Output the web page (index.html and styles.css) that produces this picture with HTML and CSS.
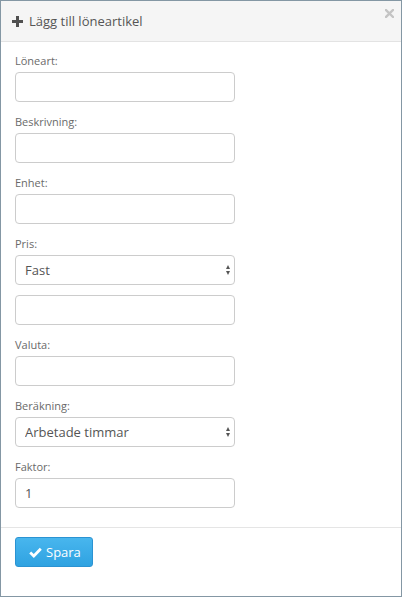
FILE: index.html
```html
<!DOCTYPE html>
<html lang="sv">
<head>
<meta charset="utf-8">
<title>Lägg till löneartikel</title>
<link rel="stylesheet" href="styles.css">
</head>
<body>
<div class="modal">
  <div class="modal-header">
    <svg class="plus" width="11" height="11" viewBox="0 0 11 11"><rect x="4" y="0" width="3" height="11" fill="#505050"/><rect x="0" y="4" width="11" height="3" fill="#505050"/></svg>
    <span class="title">Lägg till löneartikel</span>
    <svg class="close" width="9" height="9" viewBox="0 0 9 9"><path d="M1 1 L8 8 M8 1 L1 8" stroke="#c4c4c4" stroke-width="2.4" stroke-linecap="square"/></svg>
  </div>
  <div class="modal-body">
    <div class="group">
      <label class="label">Löneart:</label>
      <input class="field" type="text">
    </div>
    <div class="group">
      <label class="label">Beskrivning:</label>
      <input class="field" type="text">
    </div>
    <div class="group">
      <label class="label">Enhet:</label>
      <input class="field" type="text">
    </div>
    <div class="group">
      <label class="label">Pris:</label>
      <div class="select-wrap"><select class="field select"><option>Fast</option></select></div>
      <input class="field second" type="text">
    </div>
    <div class="group">
      <label class="label">Valuta:</label>
      <input class="field" type="text">
    </div>
    <div class="group">
      <label class="label">Beräkning:</label>
      <div class="select-wrap"><select class="field select"><option>Arbetade timmar</option></select></div>
    </div>
    <div class="group last">
      <label class="label">Faktor:</label>
      <input class="field" type="text" value="1">
    </div>
  </div>
  <div class="modal-footer">
    <button class="btn" type="button">
      <svg class="check" width="13" height="11" viewBox="0 0 13 11"><path d="M1.2 5.6 L4.8 9 L11.8 1.8" fill="none" stroke="#ffffff" stroke-width="2.8" stroke-linejoin="miter"/></svg>
      <span>Spara</span>
    </button>
  </div>
</div>
</body>
</html>
```

FILE: styles.css
```css
* { box-sizing: border-box; }
html, body { margin: 0; padding: 0; background: #ffffff; }
body { font-family: "Open Sans", "DejaVu Sans", sans-serif; color: #555; }

.modal {
  position: relative;
  width: 402px;
  height: 597px;
  border: 1px solid #8497a4;
  background: #ffffff;
}

.modal-header {
  height: 41px;
  background: #f5f5f5;
  border-bottom: 1px solid #e3e3e3;
  display: flex;
  align-items: center;
  padding-left: 11px;
}
.plus { margin-top: 1px; margin-right: 6px; flex: none; }
.title { font-size: 13px; color: #555; }
.close { position: absolute; top: 8px; right: 7px; }

.modal-body { padding: 11px 14px 7px; }
.group { margin-bottom: 12px; }
.label {
  display: block;
  font-size: 11px;
  line-height: 16px;
  color: #6a6a6a;
  margin-bottom: 3px;
}
.field {
  display: block;
  width: 220px;
  height: 30px;
  margin: 0;
  border: 1px solid #cccccc;
  border-radius: 4px;
  background: #ffffff;
  padding: 0 9px;
  font-family: "Open Sans", "DejaVu Sans", sans-serif;
  font-size: 13px;
  color: #555;
  outline: none;
}
.field.second { margin-top: 10px; }
.select-wrap { position: relative; width: 220px; }
.select { appearance: none; -webkit-appearance: none; padding-left: 9px; }
.select-wrap::before,
.select-wrap::after {
  content: "";
  position: absolute;
  left: 211px;
  width: 0;
  height: 0;
  border-left: 2.5px solid transparent;
  border-right: 2.5px solid transparent;
  pointer-events: none;
}
.select-wrap::before { top: 10px; border-bottom: 4px solid #555; }
.select-wrap::after { top: 16px; border-top: 4px solid #555; }

.modal-footer {
  border-top: 1px solid #e5e5e5;
  padding: 9px 14px;
}
.btn {
  display: flex;
  align-items: center;
  height: 30px;
  width: 78px;
  padding: 0 0 0 13px;
  border: 1px solid #2b93d2;
  border-radius: 3px;
  background: linear-gradient(#48b6ee, #2fa2e1);
  color: #ffffff;
  font-family: "Open Sans", "DejaVu Sans", sans-serif;
  font-size: 13px;
}
.check { margin-right: 4px; flex: none; }
```
